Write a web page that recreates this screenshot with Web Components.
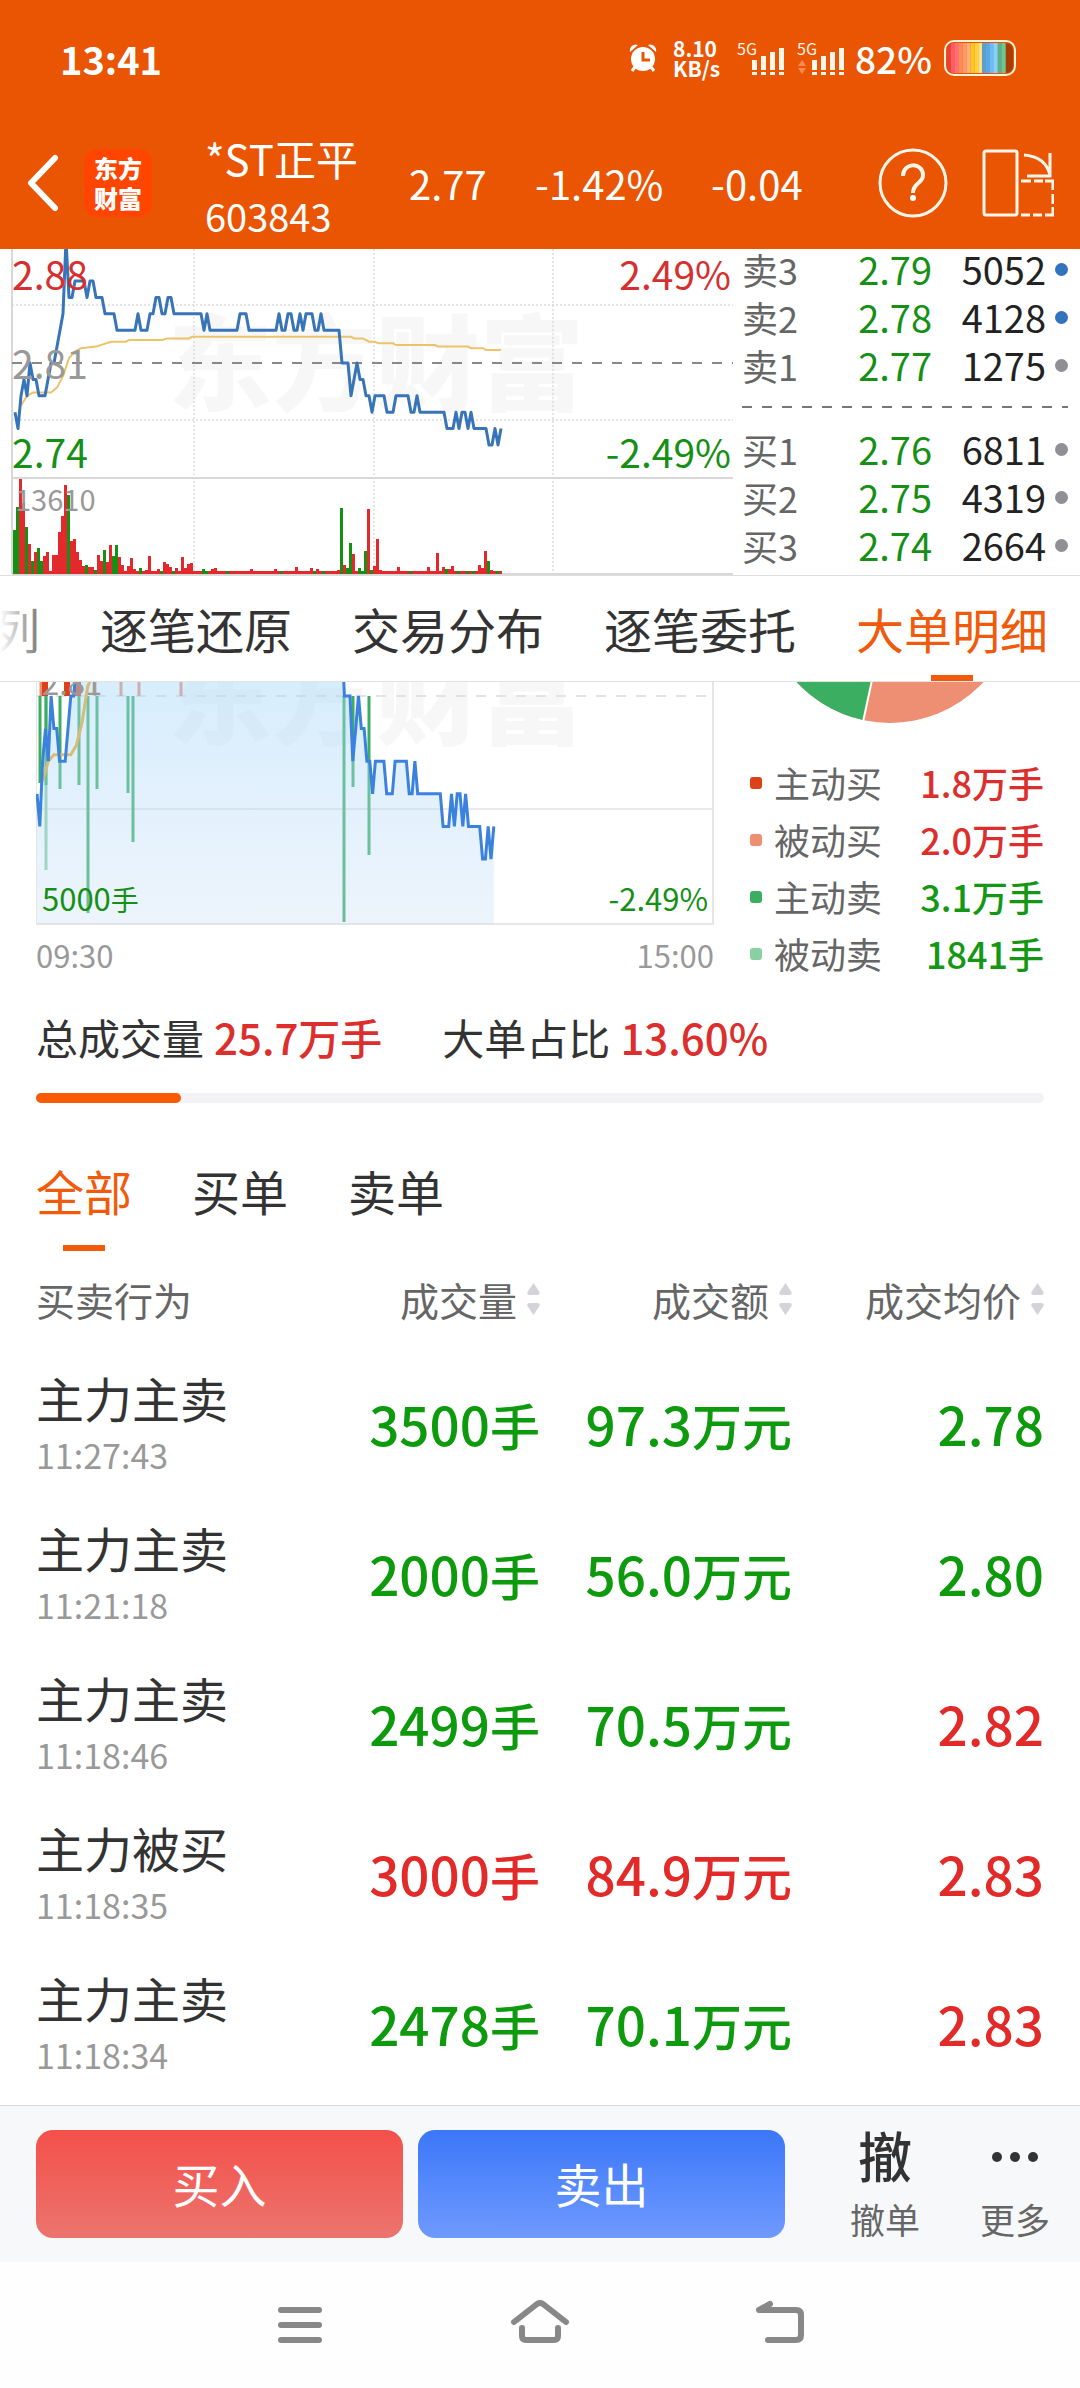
<!DOCTYPE html>
<html lang="zh-CN">
<head>
<meta charset="UTF-8">
<meta name="viewport" content="width=device-width, initial-scale=1">
<title>*ST正平 603843</title>
<style>
    body {
        margin: 0;
        min-height: 100vh;
        display: flex;
        flex-direction: column;
        background: #fff;
        color: #333;
        font-family: "Noto Sans CJK SC", "Noto Sans", sans-serif;
    }
    main { flex: 1; }
    .resumen {
        display: grid;
        grid-template-columns: minmax(0, 1fr) 344px;
        border-bottom: 1px solid #ddd;
    }
    .analisis {
        display: grid;
        grid-template-columns: minmax(0, 1fr) 294px;
        gap: 36px;
        padding: 0 36px;
    }
</style>
</head>
<body>
    <status-bar></status-bar>
    <stock-header nombre="*ST正平" codigo="603843" precio="2.77" porcentaje="-1.42%" cambio="-0.04"></stock-header>
    <section class="resumen">
        <price-chart></price-chart>
        <order-book></order-book>
    </section>
    <tab-strip>
        <a href="#lie">列</a>
        <a href="#huanyuan">逐笔还原</a>
        <a href="#fenbu">交易分布</a>
        <a href="#weituo">逐笔委托</a>
        <a href="#mingxi" aria-current="page">大单明细</a>
    </tab-strip>
    <main>
        <section class="analisis">
            <flow-chart></flow-chart>
            <flow-legend></flow-legend>
        </section>
        <volume-stats></volume-stats>
        <deal-table></deal-table>
    </main>
    <trade-bar></trade-bar>
    <system-nav></system-nav>

<script>
// Precios por minuto en centésimas: pares [precio, cantidad de minutos].
const tramos = [
    [278, 1], [277, 1], [279, 1], [280, 1], [279, 1], [281, 1], [280, 2], [279, 3], [280, 1], [281, 2], [282, 1], [283, 1], [284, 1],
    [288.5, 1], [285, 2], [286, 4], [285, 1], [286, 2], [285, 3], [284, 4], [283, 7], [284, 1], [283, 3], [284, 2], [285, 2], [284, 2],
    [285, 2], [284, 10], [283, 1], [284, 1], [283, 10], [284, 3], [283, 10], [284, 1], [283, 2], [284, 2], [283, 2], [284, 1],
    [283, 1], [284, 3], [283, 2], [284, 1], [283, 6], [281, 3], [279, 1], [280, 1], [281, 1], [280, 2], [279, 2], [278, 1], [279, 4],
    [278, 3], [279, 5], [278, 2], [279, 1], [278, 9], [277, 3], [278, 1], [277, 1], [278, 2], [277, 1], [278, 1], [277, 5],
    [276, 2], [277, 1], [276, 1], [277, 1]
];
const precios = tramos.flatMap(([precio, veces]) => Array(veces).fill(precio));

// Línea de precio promedio: [minuto, precio].
const promedio = [
    [2, 278.4], [4, 279], [6, 279.2], [12, 279.2], [14, 279.5], [16, 280.2], [18, 281.3], [20, 281.7], [22, 281.9], [27, 282],
    [32, 282.3], [37, 282.3], [38, 282.4], [49, 282.4], [51, 282.5], [58, 282.5], [59, 282.6], [112, 282.6], [113, 282.5], [116, 282.5],
    [118, 282.3], [120, 282.3], [121, 282.2], [126, 282.2], [127, 282.1], [140, 282.1], [141, 282], [151, 282], [152, 281.9], [156, 281.9], [157, 281.8], [162, 281.8]
];

// Volumen por minuto: los negativos se dibujan en verde.
const volumenes = [
    -44, -67, 95, 71, -47, 30, -13, 22, -26, -13, 18, 22, 3, 19, 19, 42, 58, 89, -79, 33, 35, 22, 14, 8, -9, 7, 7, -4,
    19, 13, -24, 12, 29, -18, -29, 17, 9, 3, 8, 16, 5, 3, -6, 3, 4, 18, 3, 3, 5, -3, 12, 10, 7, -3, 6, 3, 17, 6, 10, 11
];
const picos = {
    63: -5, 64: -3, 66: 5, 67: 6, 71: -3, 79: 5, 87: 5, 89: -3, 94: 7, 99: 6, 100: -3, 101: 5, 103: -3, 108: 4, 109: -66, 110: 9, 111: -6,
    112: -31, 113: 20, 114: 3, 115: -6, 116: -3, 117: -23, 118: 65, 119: -4, 120: 8, 121: 35, 122: 4, 128: 7, 132: -3, 138: 7, 141: 21,
    143: 7, 144: -5, 145: 5, 146: 8, 148: -3, 151: -3, 153: -3, 155: 9, 156: 6, 157: 23, 158: -13, 159: 4, 161: -3
};
for (let i = volumenes.length; i < precios.length; i++) volumenes.push(picos[i] || 3);

// Convierte una serie [minuto, precio] en los puntos de una polilínea.
const trazar = (serie, x, y) => serie.map(([m, p]) => `${x(m).toFixed(1)},${y(p).toFixed(1)}`).join(' ');
const serie_precios = precios.map((p, i) => [i, p]);

// Clase base: coloca la plantilla de cada componente en su shadow DOM.
class Componente extends HTMLElement {
    constructor() {
        super();
        this.attachShadow({ mode: 'open' });
    }
    connectedCallback() {
        this.shadowRoot.innerHTML = this.plantilla();
    }
}

class StatusBar extends Componente {
    senal(flechas) {
        return `<svg width="48" height="34" viewBox="0 0 48 34" fill="#fff6ea">
            <text x="0" y="14" font-size="16">5G</text>
            <path d="M15 19h5v10h-5zM24 15h5v14h-5zM33 11h5v18h-5zM42 7h5v22h-5zM15 31h5v3h-5zM24 31h5v3h-5zM33 31h5v3h-5zM42 31h5v3h-5z"/>
            ${flechas ? '<path fill="#f58a55" d="M5 19l4 6H1zM5 33l-4-6h8z"/>' : ''}
        </svg>`;
    }
    plantilla() {
        const colores = ['#e8403a', '#ff5b60', '#ff7078', '#ff8a55', '#ff9966', '#ffb07c', '#ffc520', '#ffd23e', '#ffe07a', '#58a0d4', '#5aa9e6', '#6dbbf0', '#8dcff8', '#58b486', '#74c596'];
        return `
            <style>
                :host { display: flex; align-items: center; height: 116px; padding: 0 64px 0 60px; background: #ea5504; color: #fff; }
                .hora { flex: 1; font-size: 38px; font-weight: 700; }
                .red { width: 44px; margin: 0 20px 0 16px; font-size: 21px; line-height: 20px; font-weight: 700; text-align: center; }
                .bateria { width: 77px; margin: 0 12px 0 10px; font-size: 37px; font-weight: 500; }
                svg { flex: none; }
                svg + svg { margin-left: 12px; }
            </style>
            <span class="hora">13:41</span>
            <svg width="28" height="28" viewBox="0 0 28 28" fill="#fff">
                <path d="M1 8a6 6 0 0 1 8-7zM27 8a6 6 0 0 0-8-7z"/>
                <circle cx="14" cy="15" r="12"/>
                <path d="M6 23l-3 4M22 23l3 4" stroke="#fff" stroke-width="3"/>
                <path d="M14 8v8h7" fill="none" stroke="#ea5504" stroke-width="3"/>
            </svg>
            <span class="red">8.10<br>KB/s</span>
            ${this.senal(false)}${this.senal(true)}
            <span class="bateria">82%</span>
            <svg width="72" height="36" viewBox="0 0 72 36">
                <clipPath id="pila"><rect x="3" y="3" width="66" height="30" rx="7"/></clipPath>
                <g clip-path="url(#pila)">
                    <rect width="72" height="36" fill="#a63d05"/>
                    ${colores.map((c, i) => `<rect x="${3 + i * 3.9}" width="4.1" height="36" fill="${c}"/>`).join('')}
                </g>
                <rect x="1" y="1" width="70" height="34" rx="9" fill="none" stroke="#fff3d6" stroke-width="2"/>
            </svg>`;
    }
}

class StockHeader extends Componente {
    plantilla() {
        const dato = (n) => this.getAttribute(n);
        return `
            <style>
                :host { display: flex; align-items: center; height: 133px; padding: 0 26px; background: #ea5504; color: #fff; font-size: 40px; }
                button { display: flex; padding: 0; border: 0; background: none; }
                .logo { width: 68px; height: 68px; margin: 0 53px 0 24px; border-radius: 13px; background: #ff4500; font-size: 24px; line-height: 30px; font-weight: 900; display: grid; place-content: center; }
                h1 { width: 204px; margin: 0; padding-top: 8px; font-size: 42px; line-height: 58px; font-weight: 400; white-space: nowrap; }
                small { display: block; font-size: 38px; }
                .precio { width: 126px; }
                .porcentaje { width: 176px; }
                .cambio { flex: 1; }
                .ayuda { margin-right: 34px; }
            </style>
            <button aria-label="返回">
                <svg width="34" height="60" viewBox="0 0 34 60"><path d="M29 5L5 30l24 25" fill="none" stroke="#fff" stroke-width="6" stroke-linecap="round" stroke-linejoin="round"/></svg>
            </button>
            <span class="logo">东方<br>财富</span>
            <h1>${dato('nombre')}<small>${dato('codigo')}</small></h1>
            <span class="precio">${dato('precio')}</span>
            <span class="porcentaje">${dato('porcentaje')}</span>
            <span class="cambio">${dato('cambio')}</span>
            <button class="ayuda" aria-label="帮助">
                <svg width="70" height="70" viewBox="0 0 70 70" fill="none" stroke="#fff6ea" stroke-width="3">
                    <circle cx="35" cy="35" r="33"/>
                    <path d="M25 28c0-14 20-14 20-1 0 9-10 7-10 18" stroke-width="4"/>
                    <circle cx="35" cy="50" r="3" fill="#fff" stroke="none"/>
                </svg>
            </button>
            <button aria-label="横屏">
                <svg width="72" height="68" viewBox="0 0 72 68" fill="none" stroke="#fff6ea" stroke-width="3">
                    <rect x="2" y="2" width="33" height="64" rx="2"/>
                    <path d="M42 6c14 1 23 8 26 20M68 4v23H45"/>
                    <path d="M39 32h10M52 32h9M63 32h8v9M71 45v10M71 58v8h-8M60 66h-9M48 66h-9"/>
                </svg>
            </button>`;
    }
}

class PriceChart extends Componente {
    plantilla() {
        const x = (m) => 15 + m * 3;
        const y = (p) => 114 - (p - 281) * 16.4;
        const barras = volumenes.map((v, i) =>
            `<rect x="${x(i) - 2}" y="${325 - Math.abs(v)}" width="3" height="${Math.abs(v)}" fill="${v < 0 ? '#159015' : '#e3292b'}"/>`).join('');
        return `
            <style>
                :host { display: block; }
                svg { display: block; width: 100%; }
                .guia { stroke: #ccc; stroke-dasharray: 2 2; }
                .marca { font-size: 104px; font-weight: 900; fill: #f7f7f7; }
                .eje { font-size: 39px; }
            </style>
            <svg viewBox="0 0 736 326">
                <text class="marca" x="168" y="154" aria-hidden="true">东方财富</text>
                <path class="guia" d="M12 56H733M12 171H733M194 0V325M374 0V325M553 0V325"/>
                <path d="M12 0V325M12 229H733M12 325H733" stroke="#d8d8d8" stroke-width="2"/>
                <path d="M12 114H733" stroke="#888" stroke-width="2" stroke-dasharray="10 10"/>
                ${barras}
                <text x="15" y="262" font-size="29" fill="#999">13610</text>
                <polyline points="${trazar(promedio, x, y)}" fill="none" stroke="#edc268" stroke-width="2"/>
                <polyline points="${trazar(serie_precios, x, y)}" fill="none" stroke="#3874b8" stroke-width="3" stroke-linejoin="round"/>
                <g class="eje">
                    <text x="12" y="41" fill="#d5302f">2.88</text>
                    <text x="12" y="130" fill="#999">2.81</text>
                    <text x="12" y="219" fill="#159015">2.74</text>
                    <text x="731" y="41" fill="#d5302f" text-anchor="end">2.49%</text>
                    <text x="731" y="219" fill="#159015" text-anchor="end">-2.49%</text>
                </g>
            </svg>`;
    }
}

class OrderBook extends Componente {
    fila([nombre, precio, cantidad, clase = '']) {
        return `<li><span>${nombre}</span><b>${precio}</b><i>${cantidad}</i><em class="${clase}"></em></li>`;
    }
    plantilla() {
        const ventas = [['卖3', '2.79', '5052', 'azul'], ['卖2', '2.78', '4128', 'azul'], ['卖1', '2.77', '1275']];
        const compras = [['买1', '2.76', '6811'], ['买2', '2.75', '4319'], ['买3', '2.74', '2664']];
        return `
            <style>
                :host { display: flex; flex-direction: column; justify-content: flex-end; height: 326px; overflow: hidden; padding: 0 12px 6px 6px; box-sizing: border-box; }
                ul { margin: 0; padding: 0; list-style: none; }
                li { display: grid; grid-template-columns: 1fr 76px 114px 22px; align-items: center; height: 48px; font-size: 38px; line-height: 48px; text-align: right; }
                span { font-size: 36px; color: #666; text-align: left; }
                b, i { font-weight: 400; font-style: normal; }
                b { color: #159015; }
                i { color: #222; }
                em { justify-self: end; width: 13px; height: 13px; border-radius: 50%; background: #8f8f94; }
                .azul { background: #3273bd; }
                svg { flex: none; display: block; width: 100%; height: 36px; }
            </style>
            <ul>${ventas.map(this.fila).join('')}</ul>
            <svg><line x1="0" x2="100%" y1="18" y2="18" stroke="#777" stroke-width="2" stroke-dasharray="10 10"/></svg>
            <ul>${compras.map(this.fila).join('')}</ul>`;
    }
}

class TabStrip extends Componente {
    plantilla() {
        return `
            <style>
                :host { display: block; position: relative; overflow: hidden; border-bottom: 1px solid #e2e2e2; }
                nav { display: flex; justify-content: flex-end; gap: 60px; padding-right: 32px; }
                ::slotted(a) { flex: none; height: 105px; font-size: 48px; line-height: 104px; color: #333; text-decoration: none; }
                ::slotted(a[aria-current]) {
                    color: #f05a0a;
                    background: linear-gradient(#f05a0a, #f05a0a) center bottom / 42px 6px no-repeat;
                }
                /* Desvanecido del borde izquierdo */
                :host::before { content: ""; position: absolute; inset: 0 auto 0 0; width: 60px; background: linear-gradient(90deg, #fff, #fff0); }
            </style>
            <nav><slot></slot></nav>`;
    }
}

class FlowChart extends Componente {
    plantilla() {
        const x = (m) => 1 + m * 2.82;
        const y = (p) => 14 - (p - 281) * 32.6;
        // Órdenes grandes de venta: [x, altura].
        const ventas = [[4, 87], [10, 89], [24, 93], [43, 89], [52, 217], [61, 93], [92, 97], [97, 146], [308, 226], [317, 91], [333, 159]];
        const linea = trazar(serie_precios, x, y);
        return `
            <style>
                :host { display: block; }
                svg { display: block; width: 100%; }
                .marca { font-size: 104px; font-weight: 900; fill: #f7f7f7; }
                p { display: flex; justify-content: space-between; margin: 0; color: #999; font-size: 31px; line-height: 60px; }
            </style>
            <svg viewBox="0 0 678 243">
                <defs>
                    <linearGradient id="cielo" x1="0" y1="0" x2="0" y2="243" gradientUnits="userSpaceOnUse">
                        <stop offset="0" stop-color="#a5d8fa" stop-opacity=".45"/>
                        <stop offset="1" stop-color="#c9def6" stop-opacity=".34"/>
                    </linearGradient>
                </defs>
                <text class="marca" x="132" y="55" aria-hidden="true">东方财富</text>
                <path d="M0 127H677" stroke="#e9e9e9" stroke-width="2"/>
                <path d="M0 14H677" stroke="#e3e3e3" stroke-width="2" stroke-dasharray="10 10"/>
                <path d="M0 0V242H677V0" fill="none" stroke="#e6e6e6" stroke-width="2"/>
                <path d="M10 14v174" stroke="#8bd0a2" stroke-width="3"/>
                <path d="${ventas.map(([px, h]) => `M${px} 14v${h}`).join('')}" stroke="#3cae62" stroke-width="3"/>
                <path d="M5 0v14M85 0v14M103 0v14M145 0v14M59 0v14" stroke="#ee8e72" stroke-width="3"/>
                <path d="M9 0v14M42 0v14" stroke="#dc4218" stroke-width="6"/>
                <path d="M31 0v14" stroke="#dc4218" stroke-width="6"/>
                <polygon points="1,242 ${linea} ${x(162)},242" fill="url(#cielo)"/>
                <polyline points="${trazar(promedio, x, y)}" fill="none" stroke="#d5bc78" stroke-width="3"/>
                <polyline points="${linea}" fill="none" stroke="#3a82de" stroke-width="3"/>
                <text x="6" y="13" font-size="31" fill="#999">2.81</text>
                <text x="6" y="229" font-size="31" fill="#159015">5000<tspan font-size="28">手</tspan></text>
                <text x="672" y="229" font-size="31" fill="#159015" text-anchor="end">-2.49%</text>
            </svg>
            <p><span>09:30</span><span>15:00</span></p>`;
    }
}

class FlowLegend extends Componente {
    plantilla() {
        const filas = [
            ['主动买', '1.8万手', '#dc4218', 'rojo'],
            ['被动买', '2.0万手', '#ee8e72', 'rojo'],
            ['主动卖', '3.1万手', '#3cae62', 'verde'],
            ['被动卖', '1841手', '#8bd0a2', 'verde']
        ];
        return `
            <style>
                :host { display: block; }
                svg { display: block; margin: 0 auto 31px 12px; }
                dl { margin: 0; }
                div { display: flex; align-items: center; height: 57px; font-size: 36px; line-height: 57px; }
                div::before { content: ""; width: 12px; height: 12px; margin-right: 12px; border-radius: 3px; background: var(--color); }
                dt { flex: 1; color: #666; }
                dd { margin: 0; font-weight: 500; }
                .rojo { color: #dc2f2d; }
                .verde { color: #149814; }
            </style>
            <svg width="256" height="41" viewBox="0 0 256 41">
                <circle cx="128" cy="-86" r="127" fill="#ee8e72"/>
                <path d="M128-86L101 38A127 127 0 0 1 1-86z" fill="#3cae62"/>
                <path d="M128-86L101 40" stroke="#fff" stroke-width="2"/>
            </svg>
            <dl>${filas.map(([n, v, c, k]) => `<div style="--color:${c}"><dt>${n}</dt><dd class="${k}">${v}</dd></div>`).join('')}</dl>`;
    }
}

class VolumeStats extends Componente {
    plantilla() {
        return `
            <style>
                :host { display: block; padding: 22px 36px 59px; }
                p { display: flex; gap: 60px; margin: 0 0 26px; font-size: 42px; line-height: 60px; }
                b { margin-left: 10px; color: #dc2f2d; font-weight: 500; }
                .barra { height: 10px; border-radius: 5px; background: #f3f3f5; }
                .barra i { display: block; width: 14.4%; height: 10px; border-radius: 5px; background: #fb5a04; }
            </style>
            <p><span>总成交量<b>25.7万手</b></span><span>大单占比<b>13.60%</b></span></p>
            <div class="barra"><i></i></div>`;
    }
}

class DealTable extends Componente {
    plantilla() {
        const flechas = '<svg width="13" height="32" viewBox="0 0 12 32" fill="#d4d4d8"><path d="M6 0L12 9q1 3-2 3H2Q-1 12 0 9zM6 32L12 23q1-3-2-3H2q-3 0-2 3z"/></svg>';
        const filas = [
            ['主力主卖', '11:27:43', '3500', '97.3', '2.78', 'verde', 'verde'],
            ['主力主卖', '11:21:18', '2000', '56.0', '2.80', 'verde', 'verde'],
            ['主力主卖', '11:18:46', '2499', '70.5', '2.82', 'verde', 'rojo'],
            ['主力被买', '11:18:35', '3000', '84.9', '2.83', 'rojo', 'rojo'],
            ['主力主卖', '11:18:34', '2478', '70.1', '2.83', 'verde', 'rojo']
        ];
        return `
            <style>
                :host { display: block; padding: 0 36px; }
                button { padding: 0; border: 0; background: none; color: inherit; font: inherit; }
                .filtros { display: flex; gap: 60px; font-size: 48px; line-height: 56px; }
                .filtros button { padding-bottom: 33px; }
                .filtros [aria-pressed=true] {
                    color: #f05a0a;
                    background: linear-gradient(#f05a0a, #f05a0a) center bottom / 42px 6px no-repeat;
                }
                table { width: 100%; table-layout: fixed; border-collapse: collapse; }
                th { height: 96px; padding: 0 0 4px; color: #666; font-size: 39px; font-weight: 400; text-align: right; }
                th:first-child, td:first-child { text-align: left; }
                th button { display: inline-flex; align-items: center; gap: 10px; }
                td { height: 144px; padding: 0 0 6px; font-size: 50px; font-weight: 500; text-align: right; white-space: nowrap; }
                td:first-child { height: 150px; padding: 0; font-size: 48px; line-height: 56px; font-weight: 400; }
                big { font-size: 53px; }
                time { display: block; padding-top: 2px; color: #999; font-size: 34px; line-height: 56px; }
                .rojo { color: #e22b29; }
                .verde { color: #0d9a0d; }
            </style>
            <div class="filtros">
                <button aria-pressed="true">全部</button>
                <button aria-pressed="false">买单</button>
                <button aria-pressed="false">卖单</button>
            </div>
            <table>
                <thead><tr>
                    <th>买卖行为</th>
                    <th><button>成交量${flechas}</button></th>
                    <th><button>成交额${flechas}</button></th>
                    <th><button>成交均价${flechas}</button></th>
                </tr></thead>
                <tbody>${filas.map(([tipo, hora, vol, monto, precio, c1, c2]) => `<tr>
                    <td>${tipo}<time>${hora}</time></td>
                    <td class="${c1}"><big>${vol}</big>手</td>
                    <td class="${c1}"><big>${monto}</big>万元</td>
                    <td class="${c2}"><big>${precio}</big></td>
                </tr>`).join('')}</tbody>
            </table>`;
    }
}

class TradeBar extends Componente {
    plantilla() {
        return `
            <style>
                :host { display: flex; align-items: center; height: 156px; padding-left: 36px; border-top: 1px solid #d9dadc; background: #f7f8fa; }
                button { padding: 0; border: 0; background: none; font: inherit; }
                .orden { flex: 1; height: 108px; padding-bottom: 4px; border-radius: 17px; color: #fff; font-size: 47px; }
                .compra { margin-right: 15px; background: linear-gradient(#f4504a, #ec746e); }
                .venta { margin-right: 35px; background: linear-gradient(#3b77f8, #6f9aff); }
                .accion { display: flex; flex-direction: column; align-items: center; width: 130px; padding-top: 6px; color: #666; font-size: 35px; line-height: 60px; }
                .accion span { height: 64px; color: #333; font-size: 54px; line-height: 60px; font-weight: 500; }
                svg { display: block; height: 64px; }
            </style>
            <button class="orden compra">买入</button>
            <button class="orden venta">卖出</button>
            <button class="accion"><span>撤</span>撤单</button>
            <button class="accion"><span><svg width="46" viewBox="0 0 46 64" fill="#333"><circle cx="5" cy="32" r="5"/><circle cx="23" cy="32" r="5"/><circle cx="41" cy="32" r="5"/></svg></span>更多</button>`;
    }
}

class SystemNav extends Componente {
    plantilla() {
        return `
            <style>
                :host { display: flex; justify-content: center; gap: 180px; align-items: center; height: 126px; background: #fefefe; }
                button { display: flex; padding: 0; border: 0; background: none; }
                svg { fill: none; stroke: #888; stroke-width: 6px; stroke-linecap: round; stroke-linejoin: round; }
            </style>
            <button aria-label="最近任务"><svg width="60" height="50" viewBox="0 0 60 50"><path d="M11 10h38M11 25h38M11 40h38"/></svg></button>
            <button aria-label="主屏幕"><svg width="60" height="50" viewBox="0 0 60 50"><path d="M4 22L27 4q3-2 6 0l23 18M12 28v8q0 4 4 4h28q4 0 4-4v-8"/></svg></button>
            <button aria-label="返回"><svg width="60" height="50" viewBox="0 0 60 50"><path d="M20 4L9 10h37q5 0 5 5v20q0 5-5 5H18"/></svg></button>`;
    }
}

// Hacemos el registro de todos los custom elements.
customElements.define('status-bar', StatusBar);
customElements.define('stock-header', StockHeader);
customElements.define('price-chart', PriceChart);
customElements.define('order-book', OrderBook);
customElements.define('tab-strip', TabStrip);
customElements.define('flow-chart', FlowChart);
customElements.define('flow-legend', FlowLegend);
customElements.define('volume-stats', VolumeStats);
customElements.define('deal-table', DealTable);
customElements.define('trade-bar', TradeBar);
customElements.define('system-nav', SystemNav);
</script>
</body>
</html>
